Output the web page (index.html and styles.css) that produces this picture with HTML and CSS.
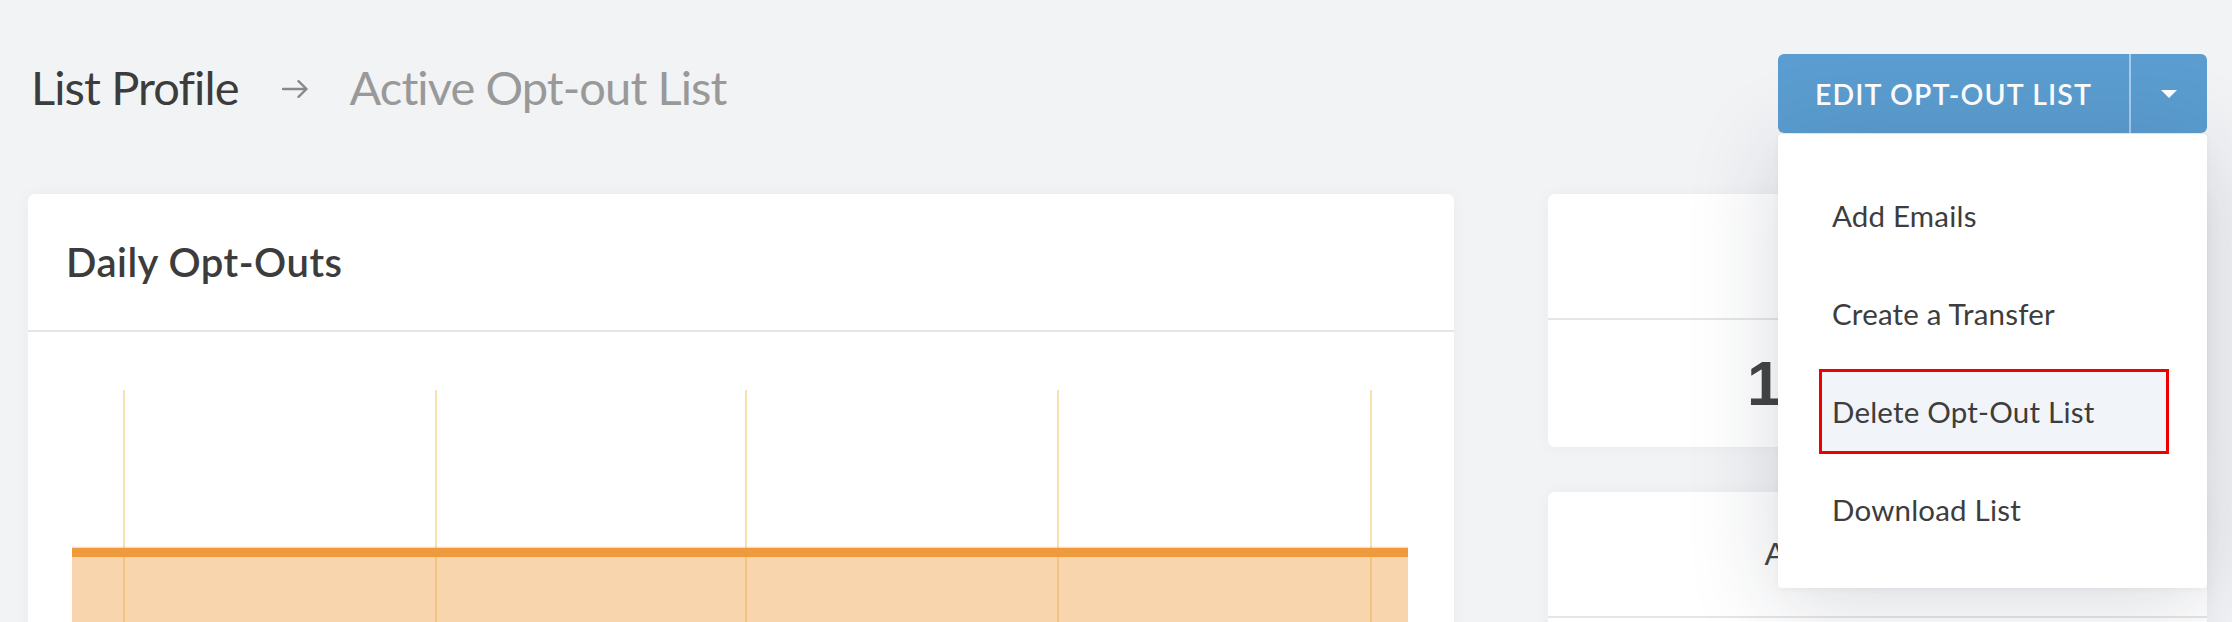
FILE: index.html
```html
<!DOCTYPE html>
<html lang="en">
<head>
<meta charset="utf-8">
<title>Active Opt-out List</title>
<link rel="stylesheet" href="styles.css">
</head>
<body>
<div class="page">
  <header class="topbar">
    <nav class="breadcrumb">
      <span class="crumb">List Profile</span>
      <svg class="crumb-arrow" width="26" height="18" viewBox="0 0 26 18" aria-hidden="true">
        <path d="M1 9 H24.5 M16.5 1.2 L24.5 9 L16.5 16.8" fill="none" stroke="#888888" stroke-width="2.4" stroke-linecap="round" stroke-linejoin="round"/>
      </svg>
      <span class="crumb crumb-current">Active Opt-out List</span>
    </nav>
    <div class="btn-group">
      <button class="btn-main" type="button">Edit Opt-Out List</button>
      <button class="btn-caret" type="button" aria-label="More actions">
        <svg width="16" height="8" viewBox="0 0 16 8" aria-hidden="true"><path d="M0 0 H16 L8 8 Z" fill="#ffffff"/></svg>
      </button>
      <ul class="dropdown">
        <li class="menu-item"><span class="menu-label">Add Emails</span></li>
        <li class="menu-item"><span class="menu-label">Create a Transfer</span></li>
        <li class="menu-item is-active"><span class="menu-label">Delete Opt-Out List</span></li>
        <li class="menu-item"><span class="menu-label">Download List</span></li>
      </ul>
    </div>
  </header>

  <main class="content">
    <section class="card chart-card">
      <div class="card-header">
        <h2 class="card-title">Daily Opt-Outs</h2>
      </div>
      <div class="chart">
        <svg class="chart-svg" width="1426" height="300" viewBox="0 0 1426 300" aria-hidden="true">
          <g stroke="#f5e2ad" stroke-width="2">
            <line x1="96" y1="58" x2="96" y2="300"/>
            <line x1="408" y1="58" x2="408" y2="300"/>
            <line x1="718" y1="58" x2="718" y2="300"/>
            <line x1="1030" y1="58" x2="1030" y2="300"/>
            <line x1="1343" y1="58" x2="1343" y2="300"/>
          </g>
          <rect x="44" y="220.5" width="1336" height="80" fill="rgba(238,154,60,0.42)"/>
          <line x1="44" y1="220.5" x2="1380" y2="220.5" stroke="#ef9a3c" stroke-width="9"/>
          <line x1="44" y1="215.5" x2="1380" y2="215.5" stroke="rgba(239,154,60,0.35)" stroke-width="1.5"/>
        </svg>
      </div>
    </section>

    <div class="side">
      <section class="card stat-card">
        <div class="stat-header"></div>
        <div class="stat-body"><span class="stat-value">1</span></div>
      </section>
      <section class="card stat-card stat-card-tall">
        <div class="stat-header"><span class="stat-title">Active Opt-Outs</span></div>
        <div class="stat-body"></div>
      </section>
    </div>
  </main>
</div>
</body>
</html>
```

FILE: styles.css
```css
* {
  box-sizing: border-box;
}

html, body {
  margin: 0;
  padding: 0;
}

body {
  background: #f2f3f5;
  font-family: "Lato", "Open Sans", sans-serif;
  color: #3d3d3d;
  overflow: hidden;
}

.page {
  padding: 54px 25px 0 28px;
  min-height: 622px;
}

/* ---------- top bar ---------- */
.topbar {
  display: flex;
  justify-content: space-between;
  align-items: baseline;
  margin-bottom: 61px;
}

.breadcrumb {
  display: flex;
  align-items: baseline;
  padding-left: 3px;
}

.crumb {
  font-size: 47px;
  font-weight: 400;
  color: #3c3c3c;
  letter-spacing: -0.9px;
}

.crumb-current {
  color: #999999;
}

.crumb-arrow {
  margin: 0 42px 0 43px;
  align-self: center;
  position: relative;
  top: 2px;
}

.btn-group {
  position: relative;
  display: flex;
  height: 79px;
  z-index: 5;
}

.btn-main,
.btn-caret {
  border: none;
  margin: 0;
  background: #5b9dd0;
  color: #ffffff;
  font-family: "Lato", "Open Sans", sans-serif;
  cursor: pointer;
  display: flex;
  align-items: center;
  justify-content: center;
}

.btn-main {
  width: 351px;
  border-radius: 6px 0 0 6px;
  font-size: 28.5px;
  font-weight: 600;
  text-transform: uppercase;
  letter-spacing: 1.1px;
  padding: 0;
}

.btn-caret {
  width: 78px;
  border-left: 2px solid #a9cbea;
  border-radius: 0 6px 6px 0;
  padding: 0;
}

.dropdown {
  position: absolute;
  top: 100%;
  left: 0;
  right: 0;
  margin: 1px 0 0 0;
  padding: 32px 0 30px;
  list-style: none;
  background: #ffffff;
  border-radius: 4px;
  box-shadow: 0 14px 90px rgba(25, 35, 60, 0.17), 0 2px 6px rgba(0, 0, 0, 0.04);
}

.menu-item {
  height: 98px;
  display: flex;
  align-items: center;
  padding: 0 38px 0 41px;
}

.menu-label {
  flex: 1;
  display: flex;
  align-items: center;
  height: 85px;
  padding-left: 10px;
  border: 3px solid transparent;
  font-size: 29.5px;
  color: #3d3d3d;
  letter-spacing: 0.2px;
}

.menu-item.is-active .menu-label {
  border-color: #ee0000;
  background: #f1f5f9;
}

/* ---------- content ---------- */
.content {
  display: grid;
  grid-template-columns: 1fr 659px;
  column-gap: 94px;
  align-items: start;
}

.card {
  background: #ffffff;
  border-radius: 7px;
  box-shadow: 0 0 18px rgba(0, 0, 0, 0.035);
  overflow: hidden;
}

.chart-card {
  height: 620px;
}

.card-header {
  height: 138px;
  display: flex;
  align-items: center;
  padding-left: 38px;
  border-bottom: 2px solid #e6e6e6;
}

.card-title {
  margin: 0;
  font-size: 40px;
  font-weight: 600;
  color: #3c3c3c;
  letter-spacing: 0.5px;
}

.chart-svg {
  display: block;
}

.side {
  display: flex;
  flex-direction: column;
  gap: 45px;
}

.stat-card {
  height: 253px;
}

.stat-card-tall {
  height: 300px;
}

.stat-header {
  height: 126px;
  border-bottom: 2px solid #e6e6e6;
  display: flex;
  align-items: center;
  justify-content: center;
}

.stat-title {
  font-family: "Liberation Sans", Arial, sans-serif;
  font-size: 32px;
  color: #444444;
}

.stat-body {
  height: 125px;
  display: flex;
  align-items: center;
  padding-left: 199px;
}

.stat-value {
  font-family: "Liberation Sans", Arial, sans-serif;
  font-weight: 700;
  font-size: 63px;
  color: #444444;
}
```
